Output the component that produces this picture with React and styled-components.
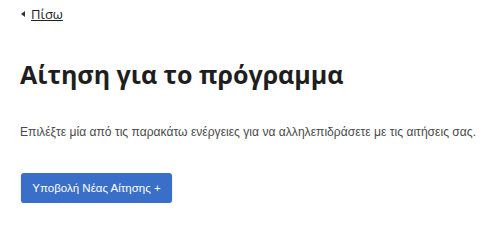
import React from "react";
import styled, { createGlobalStyle } from "styled-components";

const GlobalStyle = createGlobalStyle`
  body {
    margin: 0;
    background: #fff;
    font-family: "Open Sans", "Noto Sans", sans-serif;
  }
`;

const Page = styled.div`
  padding: 5px 20px 0 21px;
  display: flex;
  flex-direction: column;
  align-items: flex-start;
`;

const BackLink = styled.a`
  display: flex;
  align-items: center;
  gap: 6px;
  font-size: 13px;
  color: #222;
  cursor: pointer;
  span {
    text-decoration: underline;
  }
`;

const Arrow = styled.i`
  width: 0;
  height: 0;
  border-top: 3px solid transparent;
  border-bottom: 3px solid transparent;
  border-right: 4px solid #333;
`;

const Title = styled.h1`
  margin: 35px 0 0 -1px;
  font-size: 25px;
  font-weight: 700;
  color: #1e1e1e;
  line-height: 1.3;
`;

const Lead = styled.p`
  margin: 34px 0 0 -1px;
  font-family: "Liberation Sans", Arial, sans-serif;
  font-size: 12.1px;
  color: #4a4a4a;
  white-space: nowrap;
`;

const PrimaryButton = styled.button`
  margin-top: 34px;
  width: 151px;
  height: 30px;
  border: none;
  border-radius: 3px;
  background: #3a6fc9;
  color: #fff;
  font-family: "Liberation Sans", Arial, sans-serif;
  font-size: 11.5px;
  box-shadow: 0 1px 2px rgba(0, 0, 0, 0.2);
  cursor: pointer;
`;

export default function App() {
  return (
    <>
      <GlobalStyle />
      <Page>
        <BackLink>
          <Arrow />
          <span>Πίσω</span>
        </BackLink>
        <Title>Αίτηση για το πρόγραμμα</Title>
        <Lead>
          Επιλέξτε μία από τις παρακάτω ενέργειες για να αλληλεπιδράσετε με τις
          αιτήσεις σας.
        </Lead>
        <PrimaryButton>Υποβολή Νέας Αίτησης +</PrimaryButton>
      </Page>
    </>
  );
}
